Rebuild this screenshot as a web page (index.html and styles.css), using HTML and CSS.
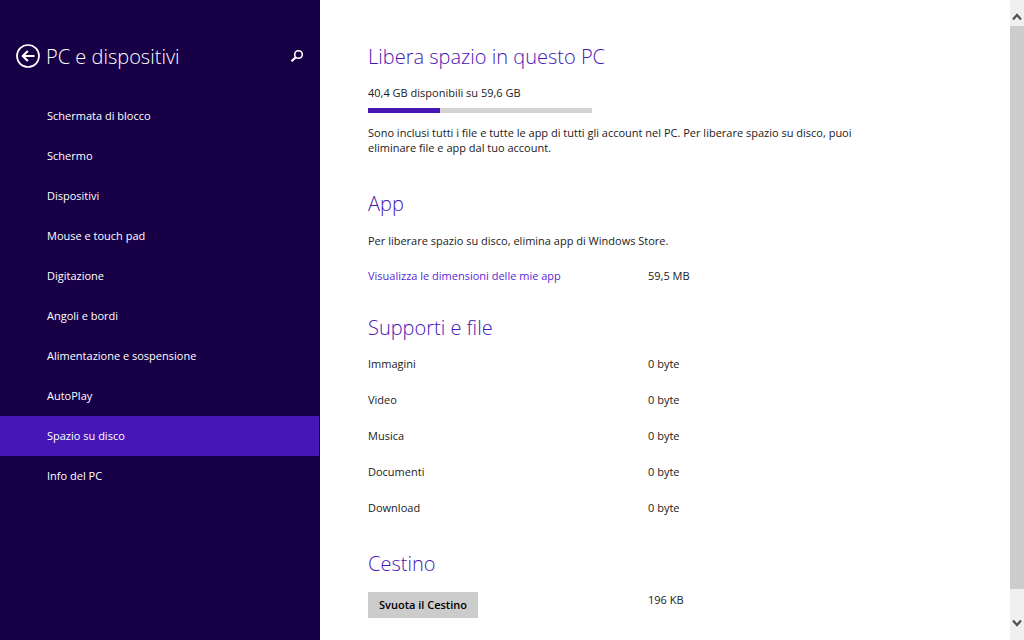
FILE: index.html
```html
<!DOCTYPE html>
<html lang="it">
<head>
<meta charset="utf-8">
<meta name="viewport" content="width=device-width, initial-scale=1">
<title>PC e dispositivi</title>
<link rel="stylesheet" href="styles.css">
</head>
<body>
<div class="app">
  <aside class="sidebar">
    <header class="sidebar-header">
      <button class="icon-button" type="button" aria-label="Indietro">
        <svg width="24" height="24" viewBox="0 0 24 24" fill="none" stroke="#fff" stroke-width="1.700">
          <circle cx="12" cy="12" r="11"/>
          <path d="M18.500 12H7M11.800 7L6.800 12l5 5" stroke-width="2.200"/>
        </svg>
      </button>
      <h1 class="sidebar-title">PC e dispositivi</h1>
      <button class="icon-button" type="button" aria-label="Cerca">
        <svg width="14" height="14" viewBox="0 0 14 14" fill="none" stroke="#fff">
          <circle cx="8.500" cy="5.500" r="3.800" stroke-width="1.600"/>
          <path d="M5.800 8.200L1.500 12.300" stroke-width="2.200"/>
        </svg>
      </button>
    </header>
    <nav class="nav">
      <a class="nav-item" href="#blocco">Schermata di blocco</a>
      <a class="nav-item" href="#schermo">Schermo</a>
      <a class="nav-item" href="#dispositivi">Dispositivi</a>
      <a class="nav-item" href="#mouse">Mouse e touch pad</a>
      <a class="nav-item" href="#digitazione">Digitazione</a>
      <a class="nav-item" href="#angoli">Angoli e bordi</a>
      <a class="nav-item" href="#alimentazione">Alimentazione e sospensione</a>
      <a class="nav-item" href="#autoplay">AutoPlay</a>
      <a class="nav-item nav-item-active" href="#spazio" aria-current="page">Spazio su disco</a>
      <a class="nav-item" href="#info">Info del PC</a>
    </nav>
  </aside>
  <main class="content">
    <section class="section">
      <h2 class="heading">Libera spazio in questo PC</h2>
      <p class="usage">40,4 GB disponibili su 59,6 GB</p>
      <div class="meter" role="img" aria-label="Spazio usato"><div class="meter-fill" style="width: 32%"></div></div>
      <p class="text">Sono inclusi tutti i file e tutte le app di tutti gli account nel PC. Per liberare spazio su disco, puoi eliminare file e app dal tuo account.</p>
    </section>
    <section class="section apps">
      <h2 class="heading">App</h2>
      <p class="text app-text">Per liberare spazio su disco, elimina app di Windows Store.</p>
      <div class="row">
        <a class="link" href="#app">Visualizza le dimensioni delle mie app</a>
        <span>59,5 MB</span>
      </div>
    </section>
    <section class="section media">
      <h2 class="heading">Supporti e file</h2>
      <table class="files">
        <tbody>
          <tr><th scope="row">Immagini</th><td>0 byte</td></tr>
          <tr><th scope="row">Video</th><td>0 byte</td></tr>
          <tr><th scope="row">Musica</th><td>0 byte</td></tr>
          <tr><th scope="row">Documenti</th><td>0 byte</td></tr>
          <tr><th scope="row">Download</th><td>0 byte</td></tr>
        </tbody>
      </table>
    </section>
    <section class="section">
      <h2 class="heading">Cestino</h2>
      <div class="row">
        <div><button class="button" type="button">Svuota il Cestino</button></div>
        <span>196 KB</span>
      </div>
    </section>
  </main>
  <div class="scrollbar" aria-hidden="true">
    <svg class="arrow" width="14" height="26" viewBox="0 0 14 26" fill="none" stroke="#505050" stroke-width="2.200"><path d="M3 19.500l4-4.500 4 4.500"/></svg>
    <div class="thumb"></div>
    <svg class="arrow arrow-down" width="14" height="26" viewBox="0 0 14 26" fill="none" stroke="#505050" stroke-width="2.200"><path d="M3 6.500l4 4.500 4-4.500"/></svg>
  </div>
</div>
</body>
</html>
```
FILE: styles.css
```css
* {
  box-sizing: border-box;
}

body {
  margin: 0;
  background: #fff;
  color: #1a1a1a;
  font: 11px/16px "Open Sans", "Noto Sans", sans-serif;
}

h1,
h2,
p {
  margin: 0;
}

.app {
  display: grid;
  grid-template-columns: 320px minmax(0, 1fr) 14px;
  min-height: 100vh;
}

.sidebar {
  background: #180046;
  color: #fff;
  padding: 40px 0 24px;
}

.sidebar-header {
  display: flex;
  align-items: center;
  gap: 6px;
  height: 32px;
  margin-bottom: 24px;
  padding: 0 16px;
}

.sidebar-title {
  flex: 1;
  padding-top: 2px;
  font-size: 20px;
  font-weight: 300;
  line-height: 32px;
}

.icon-button {
  display: flex;
  padding: 0;
  border: 0;
  background: none;
}

.nav {
  display: flex;
  flex-direction: column;
  padding-right: 1px;
}

.nav-item {
  padding: 0 47px;
  color: #fff;
  line-height: 40px;
  text-decoration: none;
}

.nav-item-active {
  background: #4617b4;
}

.content {
  padding: 41px 48px 22px;
}

.section {
  margin-bottom: 33px;
}

.section:last-child {
  margin-bottom: 0;
}

.heading {
  margin-bottom: 12px;
  color: #4617b4;
  font-size: 20px;
  font-weight: 300;
  line-height: 32px;
}

.usage {
  margin-bottom: 7px;
}

.meter {
  width: 224px;
  height: 5px;
  margin-bottom: 12px;
  background: #d3d3d3;
}

.meter-fill {
  height: 100%;
  background: #4617b4;
}

.text {
  max-width: 500px;
  line-height: 15px;
}

.apps {
  margin-bottom: 28px;
}

.app-text {
  padding-top: 1px;
  margin-bottom: 20px;
}

.row {
  display: grid;
  grid-template-columns: 280px 1fr;
}

.link {
  color: #5a1fd6;
  text-decoration: none;
}

.media {
  margin-bottom: 22px;
}

.media .heading {
  margin-bottom: 2px;
}

.files {
  border-collapse: collapse;
}

.files th,
.files td {
  height: 36px;
  padding: 0;
  font-weight: 400;
  text-align: left;
}

.files th {
  width: 280px;
}

.button {
  display: block;
  height: 26px;
  padding: 0 11px;
  border: 0;
  background: #ccc;
  color: #000;
  font: 600 11px/26px "Open Sans", "Noto Sans", sans-serif;
}

.scrollbar {
  display: flex;
  flex-direction: column;
  background: #f0f0f0;
}

.thumb {
  flex: 1;
  background: #cdcdcd;
}

.arrow {
  display: block;
}

.arrow-down {
  margin-top: 25px;
}
```
